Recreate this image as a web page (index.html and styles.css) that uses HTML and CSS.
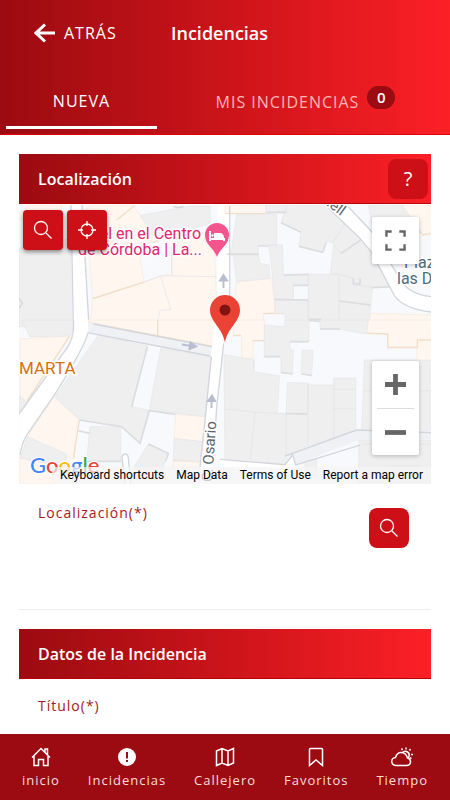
FILE: index.html
```html
<!DOCTYPE html>
<html lang="es">
<head>
<meta charset="utf-8">
<meta name="viewport" content="width=device-width, initial-scale=1">
<title>Incidencias</title>
<link rel="stylesheet" href="styles.css">
</head>
<body>
<header class="header">
  <div class="topbar">
    <button class="back" type="button">
      <svg class="back-icon" viewBox="0 0 22 20" aria-hidden="true"><path d="M11 1.500 2 10l9 8.500M2 10h19"/></svg>
      <span>ATRÁS</span>
    </button>
    <h1 class="title">Incidencias</h1>
  </div>
  <nav class="tabs">
    <a class="tab tab-active" href="#nueva">NUEVA</a>
    <a class="tab tab-list" href="#mis">MIS INCIDENCIAS <span class="badge">0</span></a>
  </nav>
</header>

<main class="content">
  <section>
    <div class="section-head">
      <h2>Localización</h2>
      <button class="square help" type="button">?</button>
    </div>
    <div class="map">
      <svg class="map-canvas" viewBox="19 205 412 279" preserveAspectRatio="xMidYMid slice">
        <rect class="ground" x="19" y="205" width="412" height="279"/>
        <g transform="translate(10 145) scale(.3334)">
          <path class="grey" d="M27 310 180 280 192 545H27zM370 215 540 183H600V235L430 292z"/>
          <path class="cream" d="M60 180H155V195L27 225V205zM240 180H370L440 290 385 302 402 410 248 460 228 200zM248 462 402 412 452 392 485 390V302L570 262 612 270 622 545H240z"/>
          <path class="cream-edge" d="m320 225 55-44M248 461 402 411M430 292l70-30"/>
          <path class="seam" d="m402 411 50-19 168 3M452 392l30 102-32 2-12 49M485 390v-90"/>
          <path class="road" d="M180 180H216L237 545H188z"/>
          <path class="edge" d="m183 180 7 365M216 180l21 365"/>
          <path class="road" d="M622 180H660V545H622z"/>
          <path class="edge" d="M27 460 37 475 27 490M490 184q16 7 30 0"/>
        </g>
        <g transform="translate(225 145) scale(.3334)">
          <path class="cream" d="M0 180H122V205H0zM35 412 140 399 150 500 115 506 118 545H20zM530 180H620V270H592zM437 505 620 510V545H430z"/>
          <path class="cream-edge" d="M0 206H122M592 270 620 264M115 506H178"/>
          <path class="grey" d="M35 208H155V300H100V328H18zM122 180H185V202H122zM185 180H315L360 235 325 292 305 290 293 322 222 302 228 262 168 232zM360 235 410 285 348 325 322 293zM410 285 450 330 508 425 440 428 385 420V400L342 388 316 385 326 300 348 325zM132 300H172L175 390 250 388V420H205V462H150zM25 328H100L105 355 132 360 135 400 35 410zM250 388H342V545H288V522H250zM342 388 385 400 390 418 442 424 437 480 343 468zM343 470 437 480 430 545H340zM150 462 250 465V545H180V505H150zM430 180H530L592 265 440 230z"/>
          <path class="shade" d="m122 203 62-1M168 233l60 29M222 304l71 18 10-28M348 325l62-42M100 303h30M5 328h95M175 390l75-2M205 421h44M385 400v16l20 2v-18M343 468l94 12M250 523h38M149 464l101 1M440 428l62-3"/>
          <path class="road" d="M300 180H368L440 258 530 410Q555 448 618 455V501Q540 492 510 455L435 315 405 280z"/>
          <path class="edge" d="m368 183 70 75 92 152q25 38 88 45M304 183l101 97 32 38 73 137q30 37 108 46"/>
          <path class="road" d="M0 330H14V460H0z"/><path class="edge" d="M14 183V460"/>
        </g>
        <g transform="translate(10 320) scale(.3334)">
          <path class="cream" d="M232 0H617V82L235 5zM30 57 178 48 50 245 30 228zM132 230 208 300 190 417 52 350zM497 283 588 290 577 365 492 355zM27 412 165 440V492H27zM490 422 572 426 570 442H488z"/>
          <path class="cream-edge" d="M235 8 615 80M178 50 50 245M208 300 190 415M443 0V45M490 422h80"/>
          <path class="grey" d="M35 0H188V40L178 48 60 50zM27 228 50 248 27 285zM265 45 412 78 365 260 415 270 390 370 335 320 210 300 135 230zM452 85 603 110 585 290 418 270zM240 320 332 320V425L230 422zM415 372 475 400 455 455 368 448zM492 355 577 365 572 425 490 420zM52 350 170 402 165 440 30 415z"/>
          <path class="shade" d="M208 300 335 320 390 370 418 272 497 283M365 260 412 80M205 332 240 340M230 424H332M415 372l60 28-8 22"/>
          <path class="lane" d="M232 5 605 82 600 110 235 38z"/>
          <path class="edge" d="M232 38 600 108M250 12 615 82"/>
          <path class="road" d="M188 0H234L235 38Q225 80 130 230L50 345Q35 370 28 405V285L170 90Q195 50 188 0z"/>
          <path class="edge" d="M190 0Q195 50 170 85L28 280M234 38Q225 80 130 230L52 342Q35 370 30 405"/>
          <path class="road" d="M615 0H655L640 100 618 260 608 492H566L590 290 603 105z"/>
          <path class="edge" d="M604 110 585 300 570 440M641 70 620 260 610 420"/>
          <path class="road edge" d="M345 492 336 415Q336 402 346 402 354 402 355 415L362 492"/>
        </g>
        <g transform="translate(225 320) scale(.3334)">
          <path class="cream" d="M25 0H118V62H85V115H50V48H25zM430 0H620V222H575V85H488V42L425 38z"/>
          <path class="cream-edge" d="M25 46H48M82 62H118M425 40 488 42V82H577V60H618"/>
          <path class="grey" d="M118 15 180 20V0H252V66H195V90H205L202 162 168 158V110H118zM285 0H430L422 42 345 28H285zM232 90 264 92 260 166 228 162zM-3 104 88 120 86 155 163 168 157 280 183 282 182 432 0 420zM187 187 250 190 248 282 183 280zM250 195H326V174H392V330L250 378 183 405V282H248zM418 120H620V335H410zM402 360H618V492H400zM240 418H275V470H240z"/>
          <path class="shade" d="M118 110H165M195 65H250M168 157l35 5M230 162l30 4M183 280l63 2M285 27h60M252 1 285 4"/>
          <path class="seam" d="M0 267 90 276 183 282M90 276 76 420M326 194V350M327 208H390M326 266H390M248 190V378M86 120V155M415 212H620M412 372H618M480 437H585"/>
          <path class="lane" d="M180 408 395 330H620V358H408L215 432 185 432z"/>
          <path class="edge" d="M180 408 395 330 618 338M210 435l195-60"/>
          <path class="road" d="M-15 418 180 434 203 405 212 430 178 465-15 443z"/>
          <path class="edge" d="M-15 418 180 434 203 405 212 434"/>
        </g>
        <g class="arrows">
          <path d="M223.500 288V278M220 280.500 223.500 275 227 280.500zM182 344.500 191 346M190.500 342.500 196 346.500 189.500 349zM211.500 408V399M208 401 212 395.500 215 401z"/>
        </g>
        <g class="poi">
          <text x="201" y="239" text-anchor="end">Hotel en el Centro</text>
          <text x="202" y="255" text-anchor="end">de Córdoba | La...</text>
        </g>
        <text class="marta" x="19" y="374">MARTA</text>
        <text class="street" transform="translate(208 482) rotate(-86)" x="0" y="4">C. Osario</text>
        <text class="street" transform="translate(344 212) rotate(36)" x="0" y="5" text-anchor="end">Carbonell</text>
        <g class="plaza"><text x="404" y="268">Plaza de</text><text x="397" y="284">las Doblas</text></g>
        <path class="hotel-pin" d="M217 257C214 248 205 245 205 235A12 12 0 0 1 229 235C229 245 220 248 217 257z"/>
        <path class="hotel-bed" d="M210 231v10M210 239H224V241"/>
        <path class="hotel-sheet" d="M214 233h5.500q4.500 0 4.500 5h-10z"/><circle class="hotel-sheet" cx="212.500" cy="235.500" r="1.200"/>
        <path class="marker" d="M225 343C223 328 210 322 210 310A15 15 0 0 1 240 310C240 322 227 328 225 343z"/>
        <circle class="marker-dot" cx="225" cy="310" r="5.500"/>
        <text class="google" x="30" y="473"><tspan class="g-blue">G</tspan><tspan class="g-red">o</tspan><tspan class="g-yellow">o</tspan><tspan class="g-blue">g</tspan><tspan class="g-green">l</tspan><tspan class="g-red">e</tspan></text>
      </svg>
      <div class="map-tools">
        <button class="square raised" type="button" aria-label="Buscar"><svg class="icon" viewBox="0 0 20 20"><circle cx="8" cy="8" r="6.500"/><path d="m13 13 5.500 5.500"/></svg></button>
        <button class="square raised" type="button" aria-label="Mi ubicación"><svg class="icon" viewBox="0 0 20 20"><circle cx="10" cy="10" r="6"/><path d="M10 1v5M10 14v5M1 10h5M14 10h5"/></svg></button>
      </div>
      <button class="map-control fullscreen" type="button" aria-label="Pantalla completa"><svg viewBox="0 0 22 22"><path d="M1.500 7V1.500H7M15 1.500H20.500V7M20.500 15V20.500H15M7 20.500H1.500V15"/></svg></button>
      <div class="map-control zoom">
        <button type="button" aria-label="Acercar"><svg viewBox="0 0 22 22"><path d="M0 11H22M11 0V22"/></svg></button>
        <button type="button" aria-label="Alejar"><svg viewBox="0 0 22 22"><path d="M0 11H22"/></svg></button>
      </div>
      <div class="map-legal">
        <button type="button">Keyboard shortcuts</button>
        <button type="button">Map Data</button>
        <a href="#terms">Terms of Use</a>
        <a href="#report">Report a map error</a>
      </div>
    </div>
    <div class="field-row">
      <div class="field">
        <label for="place">Localización(*)</label>
        <input id="place" type="text">
      </div>
      <button class="square" type="button" aria-label="Buscar dirección"><svg class="icon" viewBox="0 0 20 20"><circle cx="8" cy="8" r="6.500"/><path d="m13 13 5.500 5.500"/></svg></button>
    </div>
  </section>

  <section>
    <div class="section-head">
      <h2>Datos de la Incidencia</h2>
    </div>
    <div class="field field-title">
      <label for="subject">Título(*)</label>
      <input id="subject" type="text">
    </div>
  </section>
</main>

<nav class="bottom">
  <a href="#inicio"><svg class="nav-icon" viewBox="0 0 20 20"><path d="M1 10.500 10 1.500 19 10.500M3 9V18.500H7.500V12.500H12.500V18.500H17V9M14 5V2H16.500V8"/></svg><span>inicio</span></a>
  <a href="#incidencias"><svg class="nav-icon" viewBox="0 0 20 20"><circle class="alert-disc" cx="10" cy="10" r="9"/><path class="alert-mark" d="M10 5V11.500M10 13V15"/></svg><span>Incidencias</span></a>
  <a href="#callejero"><svg class="nav-icon" viewBox="0 0 20 20"><path d="M1.500 4 7 1.500 13 4 18.500 1.500V16L13 18.500 7 16 1.500 18.500zM7 1.500V16M13 4V18.500"/></svg><span>Callejero</span></a>
  <a href="#favoritos"><svg class="nav-icon" viewBox="0 0 20 20"><path d="M3.500 2.500Q3.500 1.500 4.500 1.500H15.500Q16.500 1.500 16.500 2.500V18.500L10 13 3.500 18.500z"/></svg><span>Favoritos</span></a>
  <a href="#tiempo"><svg class="nav-icon weather" viewBox="0 0 22 20"><path d="M5 18.500H16A3.800 3.800 0 0 0 16.500 11Q15 5.500 10 5.500 6 5.500 4.500 10.500A4 4 0 0 0 5 18.500zM11.500 5.500Q13 3.500 15.500 4.500 19 6 18 9.500L17 11M15 .5V2.500M10.500 1.500 11.500 3M19.500 2 18.500 3.500M20 7.500H22M19 10.500 20.500 11.500"/></svg><span>Tiempo</span></a>
</nav>
</body>
</html>
```
FILE: styles.css
```css
:root {
  --dark: #9b0b11;
  --mid: #cb141a;
  --bright: #fb2026;
  --button: #cd0f17;
  --gradient: linear-gradient(90deg, var(--dark), var(--mid) 50%, var(--bright));
}

* { box-sizing: border-box; }

body {
  margin: 0;
  height: 100vh;
  display: flex;
  flex-direction: column;
  background: #fff;
  font-family: "Open Sans", "Noto Sans", sans-serif;
  font-size: 16px;
  color: #fff;
}

button {
  border: 0;
  padding: 0;
  background: none;
  color: inherit;
  font: inherit;
}

a { color: inherit; text-decoration: none; }

h1, h2 { margin: 0; font-weight: 600; }

.header {
  flex: none;
  background: var(--gradient);
  border-bottom: 1px solid #e00008;
}

.topbar {
  display: grid;
  grid-template-columns: 137px 1fr;
  align-items: center;
  height: 66px;
  padding: 0 10px 0 34px;
}

.back {
  display: flex;
  align-items: center;
  gap: 8px;
  letter-spacing: 1px;
}

.back-icon {
  width: 22px;
  height: 20px;
  fill: none;
  stroke: #fff;
  stroke-width: 3;
}

.title { font-size: 18px; }

.tabs {
  display: flex;
  padding: 6px 0 5px 6px;
}

.tab {
  display: flex;
  justify-content: center;
  align-items: center;
  height: 57px;
  letter-spacing: 1px;
}

.tab-active {
  flex: 0 0 34%;
  padding-top: 3px;
  border-bottom: 3px solid #fff;
}

.tab-list {
  flex: 1;
  gap: 8px;
  padding: 3px 0 0 4px;
  color: #ffb5b7;
}

.badge {
  margin-bottom: 10px;
  width: 28px;
  border-radius: 12px;
  background: var(--dark);
  color: #fff;
  font-size: 15px;
  font-weight: 600;
  line-height: 23px;
  letter-spacing: 0;
  text-align: center;
}

.content {
  flex: 1;
  min-height: 0;
  overflow-y: auto;
  scrollbar-width: none;
  padding: 19px 19px 0;
}

.section-head {
  display: flex;
  align-items: center;
  justify-content: space-between;
  height: 50px;
  padding: 0 3px 0 19px;
  background: var(--gradient);
  border-bottom: 1px solid #bd0008;
}

.section-head h2 { font-size: 16px; }

.square {
  flex: none;
  display: grid;
  place-items: center;
  width: 40px;
  height: 40px;
  border-radius: 8px;
  background: var(--button);
}

.help { font-size: 20px; }

.icon {
  width: 20px;
  height: 20px;
  fill: none;
  stroke: #fff;
  stroke-width: 1.3;
}

.map {
  position: relative;
  height: 279px;
  margin-top: 1px;
  overflow: hidden;
  color: #000;
  font-family: Roboto, sans-serif;
}

.map-canvas { display: block; width: 100%; height: 100%; }

.ground { fill: #f7f9fc; }
.grey { fill: #efefef; stroke: #e5e6e8; stroke-width: 2; }
.cream { fill: #fff6ef; stroke: #f7e9dc; stroke-width: 2; }
.lane { fill: #eff1f5; }
.road { fill: #fff; }
.edge { stroke: #d3d6dd; stroke-width: 4; }
.edge:not(.road) { fill: none; }
.shade { fill: none; stroke: #dcdde0; stroke-width: 5; }
.seam { fill: none; stroke: #e3e3e5; stroke-width: 2; }
.cream-edge { fill: none; stroke: #f2dfc9; stroke-width: 4; }
.arrows { fill: #b9bdd2; stroke: #b9bdd2; stroke-width: 2; }

.poi, .marta, .street, .plaza {
  stroke: #fff;
  stroke-width: 3;
  paint-order: stroke;
  font-size: 16px;
}

.poi { fill: #e0246e; }
.marta { fill: #d96f0c; font-size: 17px; }
.street { fill: #5d6670; font-size: 15px; }
.plaza { fill: #4d6d7c; }
.hotel-pin { fill: #f5558f; }
.hotel-bed { fill: none; stroke: #fff; stroke-width: 2; }
.hotel-sheet { fill: #fff; }
.marker { fill: #ea4335; }
.marker-dot { fill: #811411; }
.google { font: 500 22px Lato, sans-serif; stroke: #fff; stroke-width: 2; paint-order: stroke; }
.g-blue { fill: #4285f4; }
.g-red { fill: #ea4335; }
.g-yellow { fill: #fbbc05; }
.g-green { fill: #34a853; }

.map-tools {
  position: absolute;
  top: 5px;
  left: 4px;
  display: flex;
  gap: 4px;
}

.raised {
  border-radius: 4px;
  box-shadow: 0 2px 4px rgba(0, 0, 0, .45);
}

.map-control {
  position: absolute;
  right: 12px;
  width: 47px;
  background: #fff;
  border-radius: 2px;
  box-shadow: 0 1px 4px rgba(0, 0, 0, .25);
}

.map-control svg {
  width: 21px;
  height: 21px;
  fill: none;
  stroke: #666;
  stroke-width: 5;
}

.fullscreen {
  top: 12px;
  height: 47px;
  display: grid;
  place-items: center;
}

.map .fullscreen svg { stroke-width: 2.5; }

.zoom { bottom: 29px; padding: 0 5px; }

.zoom button {
  display: grid;
  place-items: center;
  width: 100%;
  height: 47px;
}

.zoom button + button { border-top: 1px solid #ddd; }

.map-legal {
  position: absolute;
  right: 0;
  bottom: 0;
  display: flex;
  gap: 12px;
  padding: 0 8px;
  background: rgba(245, 245, 245, .7);
  font-size: 12px;
  line-height: 17px;
  white-space: nowrap;
}

.field-row {
  display: flex;
  justify-content: space-between;
  height: 126px;
  padding: 24px 22px 0 19px;
  border-bottom: 1px solid #ededed;
  margin-bottom: 19px;
}

.field {
  flex: 1;
  display: flex;
  flex-direction: column;
}

.field label {
  color: #a81820;
  font-size: 14px;
  line-height: 18px;
  letter-spacing: 1px;
  margin-top: -4px;
}

.field input {
  border: 0;
  outline: 0;
  padding: 0;
  margin-top: 12px;
  height: 32px;
  background: none;
  font: inherit;
}

.field-title { padding: 22px 19px 0; }

.bottom {
  flex: none;
  display: flex;
  justify-content: space-between;
  height: 66px;
  padding: 13px 22px 0;
  background: var(--dark);
}

.bottom a {
  display: flex;
  flex-direction: column;
  align-items: center;
  gap: 4px;
  font-size: 13px;
  line-height: 18px;
  letter-spacing: 1px;
  color: #fbdcdc;
}

.nav-icon {
  width: 20px;
  height: 20px;
  fill: none;
  stroke: #fff;
  stroke-width: 1.5;
}

.weather { width: 22px; }
.alert-disc { fill: #fff; stroke: none; }
.alert-mark { stroke: var(--dark); stroke-width: 2; }
```
